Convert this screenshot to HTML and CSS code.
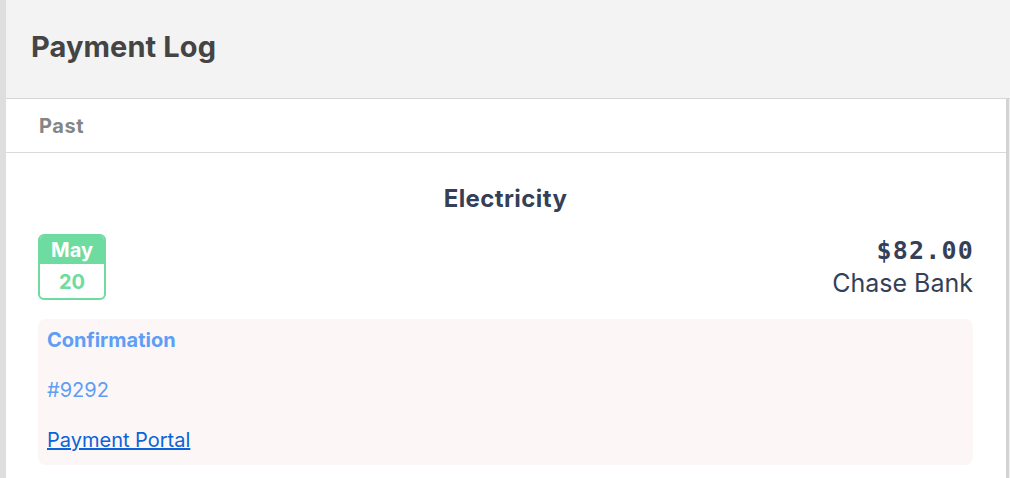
FILE: index.html
```html
<!DOCTYPE html>
<html lang="en">
<head>
<meta charset="utf-8">
<title>Payment Log</title>
<link rel="stylesheet" href="styles.css">
</head>
<body>
<div class="page">
  <header class="header">
    <h1 class="title">Payment Log</h1>
  </header>
  <main class="panel">
    <div class="tab">Past</div>
    <section class="entry">
      <h2 class="entry-name">Electricity</h2>
      <div class="entry-row">
        <div class="date">
          <div class="date-month">May</div>
          <div class="date-day">20</div>
        </div>
        <div class="amount">
          <div class="amount-value">$82.00</div>
          <div class="amount-bank">Chase Bank</div>
        </div>
      </div>
      <div class="details">
        <div class="details-label">Confirmation</div>
        <div class="details-code">#9292</div>
        <a class="details-link" href="#">Payment Portal</a>
      </div>
    </section>
  </main>
</div>
</body>
</html>
```
FILE: styles.css
```css
html, body {
  margin: 0;
  padding: 0;
  height: 100%;
  overflow: hidden;
  background: #efefef;
}
body {
  font-family: Inter, "Liberation Sans", sans-serif;
}
.page {
  display: flex;
  flex-direction: column;
  height: 100%;
  border-left: 6px solid #dedede;
  box-sizing: border-box;
}
.header {
  height: 98px;
  background: #f3f3f3;
  border-bottom: 1px solid #d6d6d6;
  display: flex;
  align-items: center;
  padding-left: 25px;
  flex-shrink: 0;
}
.title {
  margin: 0;
  font-size: 29px;
  font-weight: 700;
  color: #444444;
  letter-spacing: 0.1px;
  position: relative;
  top: -3px;
}
.panel {
  flex: 1;
  margin-right: 1px;
  border-right: 3px solid #d4d4d4;
  background: #fff;
}
.tab {
  height: 54px;
  box-sizing: border-box;
  border-bottom: 1px solid #dadada;
  padding-left: 33px;
  display: flex;
  align-items: center;
  font-size: 20px;
  font-weight: 700;
  letter-spacing: 0.6px;
  color: #858585;
}
.entry {
  padding: 31px 33px 0 32px;
}
.entry-name {
  margin: 0;
  text-align: center;
  font-size: 24px;
  font-weight: 700;
  letter-spacing: 0.4px;
  color: #353f57;
  line-height: 30px;
}
.entry-row {
  display: flex;
  justify-content: space-between;
  align-items: flex-start;
  margin-top: 20px;
}
.date {
  width: 68px;
  border-radius: 6px;
  border: 2px solid #6edba0;
  box-sizing: border-box;
  overflow: hidden;
  text-align: center;
  font-weight: 700;
  font-size: 20px;
}
.date-month {
  background: #6edba0;
  color: #ffffff;
  height: 28px;
  line-height: 28px;
}
.date-day {
  color: #6edba0;
  height: 34px;
  line-height: 36px;
}
.amount {
  text-align: right;
  padding-top: 3px;
}
.amount-value {
  font-family: "DejaVu Sans Mono", "Liberation Mono", monospace;
  font-weight: 700;
  font-size: 25px;
  letter-spacing: 1.2px;
  margin-right: -1px;
  color: #353f57;
  line-height: 28px;
}
.amount-bank {
  margin-top: 3px;
  font-size: 25px;
  color: #353f57;
  line-height: 30px;
}
.details {
  margin-top: 19px;
  background: #fcf6f6;
  border-radius: 8px;
  padding: 7px 9px 11px;
  display: flex;
  flex-direction: column;
  align-items: flex-start;
  gap: 22px;
  font-size: 20px;
  line-height: 28px;
}
.details-label {
  font-weight: 700;
  color: #5f9ef5;
}
.details-code {
  color: #5f9ef5;
}
.details-link {
  color: #0a63d8;
  text-decoration: underline;
}
```
